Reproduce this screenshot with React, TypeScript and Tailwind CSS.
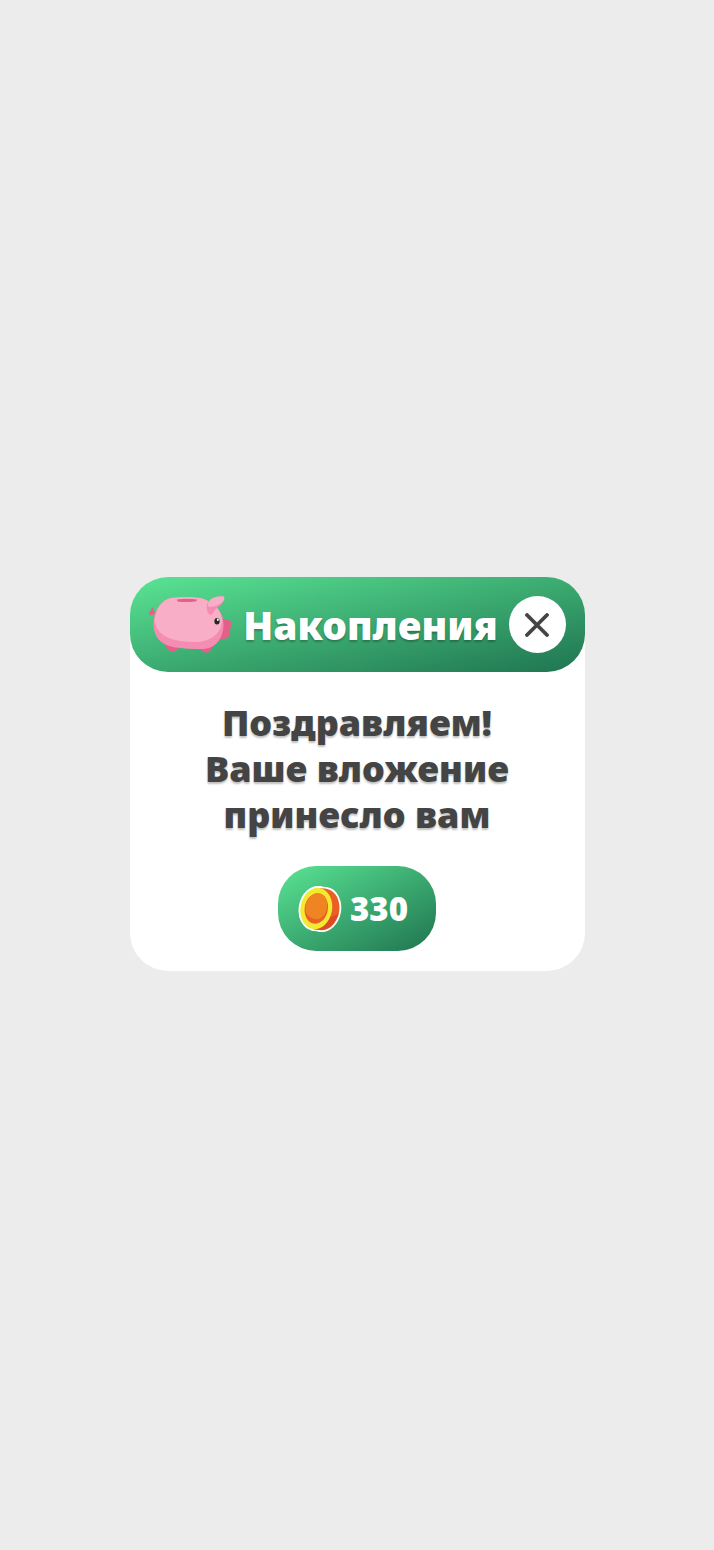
import React from "react";

function PiggyBank() {
  return (
    <svg viewBox="0 0 84 57" className="h-[57px] w-[84px] shrink-0" aria-hidden="true">
      <path d="M7.500 18 C6.500 16.500 6 15.500 5 15 C5 13 4 11 2.500 11.500 C2 12.500 2.500 13.500 2.500 14.500 C0 15 -.5 17.500 1 19 C3 20 5 18.500 4.500 16.500 L6.500 20Z" fill="#e4608a" />
      <path d="M15.500 48 L19 54 Q23 57 27 54.500 L31 51Z" fill="#e4608a" />
      <path d="M49 51 L53 55 Q57 58 61 55.500 L65 48Z" fill="#e4608a" />
      <path d="M72 22 L80.500 24.500 Q82.500 25 82.300 28 L80 40 Q79.500 42 77 42.500 L69 43.500Z" fill="#e4608a" />
      <path d="M22 2 C35 .5 50 .5 57 4 C68 8 74.500 18 74.500 28 C74.500 43 66 53 53 53 Q42 53.500 27 51.500 C11 49 4 41 4.500 25 C6 12 13 4 22 2Z" fill="#f58db2" />
      <path d="M22 2 C35 .5 50 .5 57 4 C67 8 73 16 73 25 C72 39 60 46 46 46 C28 46 9 43 5.500 25 C7 12 13 4 22 2Z" fill="#f9aec7" />
      <path d="M28 3.500 Q38 2 48 3.500 Q48.500 4.500 46.500 5.500 Q38 6.500 29.500 5.800 Q27.500 5 28 3.500Z" fill="#e4608a" />
      <path d="M75 1 C77 7 67 11 63 18.500 C59 20 57 14 58 8 C60 2 70 -1 75 1Z" fill="#f58db2" />
      <path d="M75 .5 C77.500 6 66 12 59 10.500 C57.500 3 68 -1 75 .5Z" fill="#f9aec7" />
      <ellipse cx="68" cy="25.200" rx="2.600" ry="3.300" fill="#252525" />
      <ellipse cx="68.800" cy="23.800" rx="1" ry="1.300" fill="#fff" />
    </svg>
  );
}

function Coin() {
  return (
    <svg viewBox="0 0 44 48" className="h-12 w-11 shrink-0" aria-hidden="true">
      <g fill="#fff" stroke="#fff" strokeWidth="3.600" strokeLinejoin="round">
        <ellipse cx="18.300" cy="23.500" rx="15.800" ry="20.800" transform="rotate(10 18.300 23.500)" />
        <ellipse cx="25.500" cy="24.500" rx="15.800" ry="20.800" transform="rotate(10 25.500 24.500)" />
        <path d="M21.900 3 29 4 22 45 14.700 44Z" />
      </g>
      <g fill="#ea5f25">
        <ellipse cx="25.500" cy="24.500" rx="15.800" ry="20.800" transform="rotate(10 25.500 24.500)" />
        <path d="M21.900 3 29 4 22 45 14.700 44Z" />
      </g>
      <path d="M40.900 28 C38 38 30 45.500 22 45 L14.700 44 C24 41 28 35 31 32 C35 32 38 30 40.900 28Z" fill="#dd4a27" />
      <ellipse cx="18.300" cy="23.500" rx="15.800" ry="20.800" transform="rotate(10 18.300 23.500)" fill="#f2e930" />
      <ellipse cx="18.300" cy="23.500" rx="11.600" ry="15.300" transform="rotate(10 18.300 23.500)" fill="#e95f25" />
      <path d="M21 8.300 C27 9 30 15 29.200 22 C28 31 22 35 17 34 C12 33 9 30 7.500 27 C6 17 13 7 21 8.300Z" fill="#ee8522" />
    </svg>
  );
}

export default function App() {
  return (
    <main className="flex min-h-screen items-center justify-center bg-[#ececec] px-6 pb-0.5 font-['Noto_Sans',sans-serif]">
      <section
        role="dialog"
        aria-labelledby="savings-title"
        className="w-full max-w-[455px] rounded-[38px] bg-white pb-5"
      >
        <header className="flex items-center justify-between rounded-[38px] bg-linear-to-br from-[#5ae594] to-[#1f7550] p-[19px]">
          <PiggyBank />
          <h1
            id="savings-title"
            className="text-[39px] leading-[57px] font-black text-white text-shadow-[0_2px_2px_rgb(0_0_0/0.25)]"
          >
            Накопления
          </h1>
          <button
            type="button"
            aria-label="Закрыть"
            className="flex size-[57px] shrink-0 items-center justify-center rounded-full bg-white text-[#444444]"
          >
            <svg viewBox="0 0 24 24" className="size-6" fill="none" stroke="currentColor" strokeWidth="3.800" strokeLinecap="round" aria-hidden="true">
              <path d="M2 2 22 22M22 2 2 22" />
            </svg>
          </button>
        </header>
        <div className="flex flex-col items-center gap-7 pt-7">
          <p className="text-center text-[36px] leading-[46px] font-black text-[#444444] text-shadow-[0_2px_2px_rgb(0_0_0/0.25)]">
            Поздравляем!
            <br />
            Ваше вложение
            <br />
            принесло вам
          </p>
          <div className="flex items-center gap-2 rounded-[38px] bg-linear-to-br from-[#5ae594] to-[#1f7550] py-[18px] pr-7 pl-5">
            <Coin />
            <span className="font-['Open_Sans',sans-serif] text-[33px] leading-[49px] font-extrabold text-white">330</span>
          </div>
        </div>
      </section>
    </main>
  );
}
